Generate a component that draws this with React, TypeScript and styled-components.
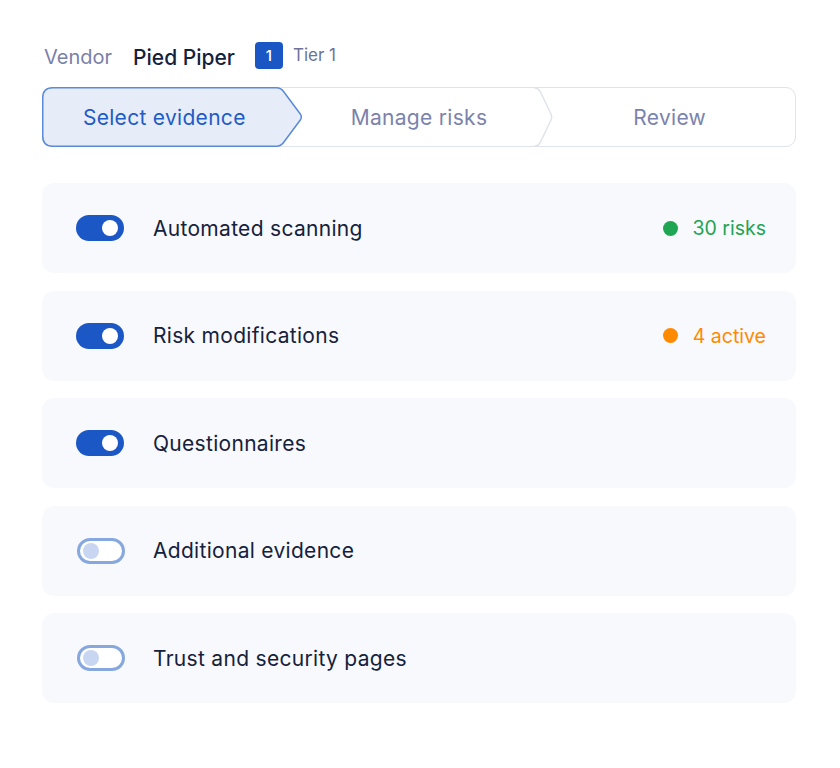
import React from 'react'
import styled, { createGlobalStyle } from 'styled-components'

const GlobalStyle = createGlobalStyle`
  body {
    margin: 0;
    background: #ffffff;
    font-family: Inter, "Noto Sans", "Liberation Sans", sans-serif;
    -webkit-font-smoothing: antialiased;
  }
`

const Page = styled.div`
  width: 754px;
  padding: 42px 0 0 42px;
  display: flex;
  flex-direction: column;
`

const Header = styled.div`
  display: flex;
  align-items: center;
  height: 30px;
  padding-left: 2px;
`

const VendorLabel = styled.span`
  font-size: 20px;
  color: #7a80a8;
  margin-right: 21px;
`

const VendorName = styled.span`
  font-size: 21px;
  color: #14213d;
  font-weight: 500;
  margin-right: 20px;
`

const TierBadge = styled.span`
  width: 28px;
  height: 27px;
  border-radius: 4px;
  background: #1a56c4;
  color: #ffffff;
  font-size: 15px;
  font-weight: 500;
  display: flex;
  align-items: center;
  justify-content: center;
  margin-right: 10px;
  margin-top: -4px;
`

const TierText = styled.span`
  font-size: 17px;
  color: #6b7399;
  margin-top: -4px;
`

const Stepper = styled.div`
  margin-top: 15px;
  height: 60px;
  box-sizing: border-box;
  border: 1.5px solid #dfe3ec;
  border-radius: 10px;
  display: grid;
  grid-template-columns: repeat(3, 1fr);
  background: #ffffff;
`

const Step = styled.div<{ $active?: boolean }>`
  position: relative;
  display: flex;
  align-items: center;
  justify-content: center;
  font-size: 21px;
  letter-spacing: 0.3px;
  color: ${p => (p.$active ? '#1f5bc6' : '#7b82ad')};
  padding-right: ${p => (p.$active ? '8px' : '0')};
`

const StepLabel = styled.span`
  position: relative;
  z-index: 1;
`

const StepShape = styled.svg`
  position: absolute;
  top: -1.5px;
  left: -1.5px;
  overflow: visible;
  z-index: 0;
`

const Divider = styled.svg`
  position: absolute;
  top: -1.5px;
  right: -10px;
  overflow: visible;
  z-index: 0;
`

const Cards = styled.div`
  margin-top: 36px;
  display: flex;
  flex-direction: column;
  gap: 17.5px;
`

const Card = styled.div`
  height: 90px;
  border-radius: 12px;
  background: #f7f9fd;
  display: flex;
  align-items: center;
  padding: 0 30px 0 34px;
`

const Toggle = styled.div<{ $on: boolean }>`
  width: 48px;
  height: 26px;
  box-sizing: border-box;
  border-radius: 13px;
  background: ${p => (p.$on ? '#1b57c5' : '#ffffff')};
  border: ${p => (p.$on ? 'none' : '3px solid #86a8de')};
  display: flex;
  align-items: center;
  justify-content: ${p => (p.$on ? 'flex-end' : 'flex-start')};
  padding: 0 ${p => (p.$on ? '6px' : '3px')};
  margin: ${p => (p.$on ? '0' : '0 -1px 0 1px')};
  flex-shrink: 0;
`

const Knob = styled.span<{ $on: boolean }>`
  width: 16px;
  height: 16px;
  border-radius: 50%;
  background: ${p => (p.$on ? '#ffffff' : '#c8d6f1')};
`

const Label = styled.span`
  margin-left: 29px;
  font-size: 21px;
  letter-spacing: 0.3px;
  color: #16213c;
  flex: 1;
`

const Status = styled.span<{ $color: string }>`
  display: flex;
  align-items: center;
  gap: 15px;
  font-size: 19.5px;
  color: ${p => p.$color};
`

const Dot = styled.span<{ $color: string }>`
  width: 15px;
  height: 15px;
  border-radius: 50%;
  background: ${p => p.$color};
`

const W = 252.3

const ActiveShape = () => (
  <StepShape width={W} height={60}>
    <path
      d={`M 10.75 0.75 H ${W - 18} Q ${W - 13} 0.75 ${W - 10} 5.5 L ${W + 6} 27 Q ${W + 8} 30 ${W + 6} 33 L ${W - 10} 54.5 Q ${W - 13} 59.25 ${W - 18} 59.25 H 10.75 Q 0.75 59.25 0.75 49.25 V 10.75 Q 0.75 0.75 10.75 0.75 Z`}
      fill="#e6edf9"
      stroke="#5b8ad9"
      strokeWidth={1.5}
    />
  </StepShape>
)

const Chevron = () => (
  <Divider width={20} height={60}>
    <path
      d="M 0 0.75 Q 4 0.75 6.5 5 L 17 27 Q 18.5 30 17 33 L 6.5 55 Q 4 59.25 0 59.25"
      fill="#ffffff"
      stroke="#dfe3ec"
      strokeWidth={1.5}
    />
  </Divider>
)

const evidence = [
  { label: 'Automated scanning', on: true, status: { text: '30 risks', color: '#22a352', dot: '#1fa653' } },
  { label: 'Risk modifications', on: true, status: { text: '4 active', color: '#ff8a00', dot: '#ff8a00' } },
  { label: 'Questionnaires', on: true },
  { label: 'Additional evidence', on: false },
  { label: 'Trust and security pages', on: false },
]

export default function App() {
  return (
    <>
      <GlobalStyle />
      <Page>
        <Header>
          <VendorLabel>Vendor</VendorLabel>
          <VendorName>Pied Piper</VendorName>
          <TierBadge>1</TierBadge>
          <TierText>Tier 1</TierText>
        </Header>

        <Stepper>
          <Step $active>
            <ActiveShape />
            <StepLabel>Select evidence</StepLabel>
          </Step>
          <Step>
            <Chevron />
            <StepLabel>Manage risks</StepLabel>
          </Step>
          <Step>
            <StepLabel>Review</StepLabel>
          </Step>
        </Stepper>

        <Cards>
          {evidence.map(item => (
            <Card key={item.label}>
              <Toggle $on={item.on}>
                <Knob $on={item.on} />
              </Toggle>
              <Label>{item.label}</Label>
              {item.status && (
                <Status $color={item.status.color}>
                  <Dot $color={item.status.dot} />
                  {item.status.text}
                </Status>
              )}
            </Card>
          ))}
        </Cards>
      </Page>
    </>
  )
}
